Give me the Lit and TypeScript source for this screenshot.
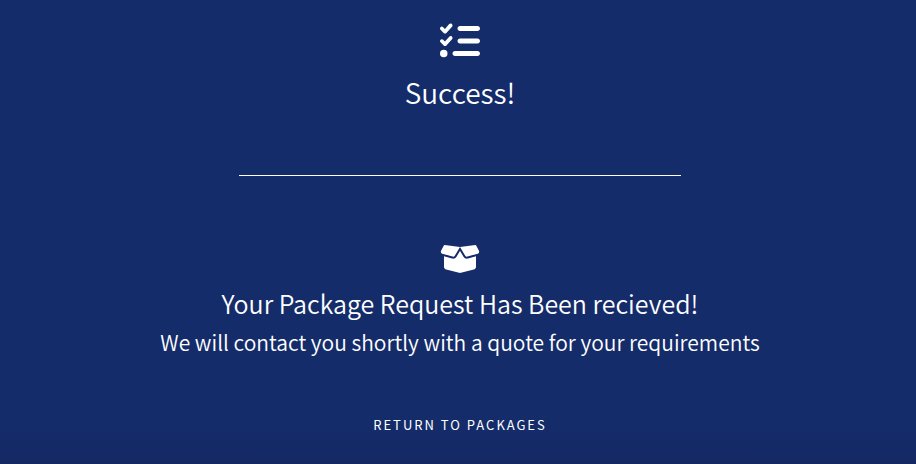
import { LitElement, html, css, svg } from "lit";
import { customElement } from "lit/decorators.js";

const listCheck = svg`<path d="M152.1 38.2c9.9 8.9 10.7 24 1.8 33.9l-72 80c-4.4 4.9-10.6 7.8-17.2 7.9s-12.9-2.4-17.6-7L7 113C-2.3 103.6-2.3 88.4 7 79s24.6-9.4 33.9 0l22.1 22.1 55.1-61.2c8.9-9.9 24-10.7 33.9-1.8zm0 160c9.9 8.9 10.7 24 1.8 33.9l-72 80c-4.4 4.9-10.6 7.8-17.2 7.9s-12.9-2.4-17.6-7L7 273c-9.4-9.4-9.4-24.6 0-33.9s24.6-9.4 33.9 0l22.1 22.1 55.1-61.2c8.9-9.9 24-10.7 33.9-1.8zM224 96c0-17.7 14.3-32 32-32H480c17.7 0 32 14.3 32 32s-14.3 32-32 32H256c-17.7 0-32-14.3-32-32zm0 160c0-17.7 14.3-32 32-32H480c17.7 0 32 14.3 32 32s-14.3 32-32 32H256c-17.7 0-32-14.3-32-32zM160 416c0-17.7 14.3-32 32-32H480c17.7 0 32 14.3 32 32s-14.3 32-32 32H192c-17.7 0-32-14.3-32-32zM48 368a48 48 0 1 1 0 96 48 48 0 1 1 0-96z"/>`;

const boxOpen = svg`<path d="M58.9 42.1c3-6.1 9.6-9.6 16.3-8.7L320 64 564.8 33.4c6.7-.8 13.3 2.7 16.3 8.7l41.7 83.4c9 17.9-.6 39.6-19.8 45.1L439.6 217.3c-13.9 4-28.8-1.9-36.2-14.3L320 64 236.6 203c-7.4 12.4-22.3 18.3-36.2 14.3L37.1 170.6c-19.3-5.5-28.8-27.2-19.8-45.1L58.9 42.1zM321.1 128l54.9 91.4c14.9 24.8 44.6 36.6 72.5 28.6L576 211.6v167c0 22-15 41.2-36.4 46.6l-204.1 51c-10.2 2.6-20.9 2.6-31 0l-204.1-51C79 419.7 64 400.5 64 378.5v-167L191.6 248c27.8 8 57.6-3.8 72.5-28.6L318.9 128h2.2z"/>`;

@customElement("app-root")
export class AppRoot extends LitElement {
  static styles = css`
    :host {
      display: block;
      min-height: 100vh;
      box-sizing: border-box;
      padding: 21px 0 24px 4px;
      background: linear-gradient(to bottom, #152c6b calc(100% - 40px), #142964);
      color: #fff;
      font-family: "Noto Sans CJK SC", "Noto Sans", sans-serif;
      font-weight: 350;
      text-align: center;
    }
    main, header, section {
      display: flex;
      flex-direction: column;
      align-items: center;
    }
    .icon {
      display: block;
      width: 40px;
      fill: currentColor;
    }
    h1, h2, p {
      margin: 0;
      font-weight: inherit;
    }
    h1 {
      margin-top: 11px;
      font-size: 28px;
      line-height: 40px;
    }
    .rule {
      width: 442px;
      max-width: 80%;
      height: 1px;
      margin: 63px 0 67px;
      border: 0;
      background: #fff;
    }
    h2 {
      margin-top: 8px;
      font-size: 25px;
      line-height: 40px;
    }
    p {
      font-size: 21px;
      line-height: 38px;
    }
    .back {
      margin-top: 52px;
      color: inherit;
      font-size: 13px;
      font-weight: 400;
      line-height: 24px;
      letter-spacing: 2px;
      text-transform: uppercase;
      text-decoration: none;
    }
  `;

  render() {
    return html`
      <main>
        <header>
          <svg class="icon" viewBox="0 0 512 512" aria-hidden="true">${listCheck}</svg>
          <h1>Success!</h1>
        </header>
        <hr class="rule" />
        <section>
          <svg class="icon" viewBox="0 0 640 512" aria-hidden="true">${boxOpen}</svg>
          <h2>Your Package Request Has Been recieved!</h2>
          <p>We will contact you shortly with a quote for your requirements</p>
        </section>
        <a class="back" href="#packages">Return to Packages</a>
      </main>
    `;
  }
}
